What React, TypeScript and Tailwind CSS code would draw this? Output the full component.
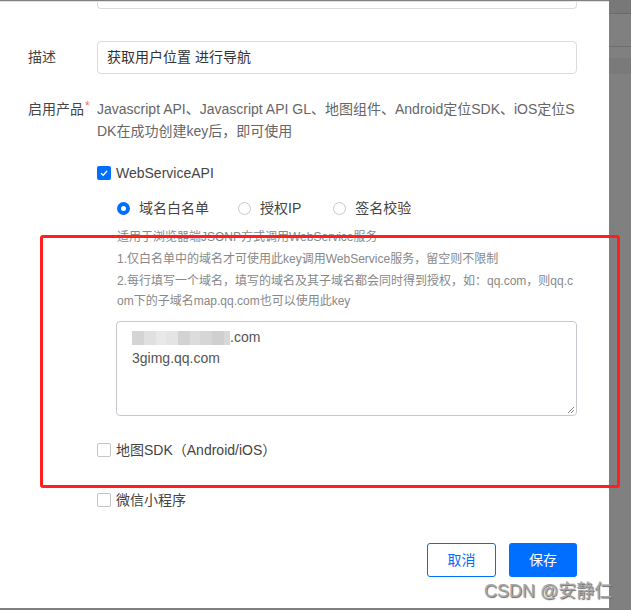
import React from 'react';

const font = { fontFamily: '"Liberation Sans", "Noto Sans CJK SC", sans-serif' };

function Checkbox({ checked, label }: { checked?: boolean; label: string }) {
    return (
        <div className="flex items-center h-5 gap-[5px]">
            {checked ? (
                <span className="w-[14px] h-[14px] rounded-[2px] bg-[#006eff] flex items-center justify-center">
                    <svg width="10" height="10" viewBox="0 0 10 10">
                        <path d="M2 5.2 L4.2 7.3 L8 3" fill="none" stroke="#fff" strokeWidth="1.4" />
                    </svg>
                </span>
            ) : (
                <span className="w-[14px] h-[14px] rounded-[2px] border border-[#c4c4c4] bg-white" />
            )}
            <span className="text-[14px] text-[#444]">{label}</span>
        </div>
    );
}

function Radio({ checked, label }: { checked?: boolean; label: string }) {
    return (
        <div className="flex items-center gap-[9px]">
            {checked ? (
                <span className="w-[13px] h-[13px] rounded-full border-[4px] border-[#006eff] bg-white" />
            ) : (
                <span className="w-[13px] h-[13px] rounded-full border border-[#c8c8c8] bg-white" />
            )}
            <span className="text-[14px] text-[#444]">{label}</span>
        </div>
    );
}

export default function App() {
    return (
        <div className="relative w-[631px] h-[610px] overflow-hidden bg-[#7f7f7f]" style={font}>
            <div className="flex">
                {/* 弹窗主体 */}
                <div className="w-[609px] h-[607px] bg-white border-t border-[#e2e2e2] mt-[1px]">
                    <div className="ml-[97px] w-[480px] h-[7px] border border-t-0 border-[#dcdcdc] rounded-b-[4px]" />

                    <div className="flex items-center mt-[32px]">
                        <div className="w-[97px] pl-[28px] text-[14px] text-[#444]">描述</div>
                        <div className="w-[480px] h-[33px] border border-[#dcdcdc] rounded-[4px] flex items-center px-[9px] text-[14px] text-[#333]">
                            获取用户位置 进行导航
                        </div>
                    </div>

                    <div className="flex mt-[24px]">
                        <div className="w-[97px] pl-[28px] text-[14px] text-[#444] leading-[22px] shrink-0">
                            启用产品<span className="text-[#f56c6c] text-[12px] align-top relative -top-[3px] ml-[1px]">*</span>
                        </div>
                        <div className="text-[14px] text-[#666] leading-[22px] whitespace-nowrap">
                            <div>Javascript API、Javascript API GL、地图组件、Android定位SDK、iOS定位S</div>
                            <div>DK在成功创建key后，即可使用</div>
                        </div>
                    </div>

                    <div className="ml-[97px] mt-[21px]">
                        <Checkbox checked label="WebServiceAPI" />

                        <div className="ml-[20px] mt-[15px] flex items-center h-5">
                            <Radio checked label="域名白名单" />
                            <div className="ml-[29px]">
                                <Radio label="授权IP" />
                            </div>
                            <div className="ml-[32px]">
                                <Radio label="签名校验" />
                            </div>
                        </div>

                        <div className="ml-[20px] mt-[9px] text-[12px] text-[#888] leading-[20px] whitespace-nowrap">
                            <div>适用于浏览器端JSONP方式调用WebService服务</div>
                            <div className="mt-[2px]">1.仅白名单中的域名才可使用此key调用WebService服务，留空则不限制</div>
                            <div className="mt-[2px]">2.每行填写一个域名，填写的域名及其子域名都会同时得到授权，如：qq.com，则qq.c</div>
                            <div>om下的子域名map.qq.com也可以使用此key</div>
                        </div>

                        <div className="relative ml-[19px] mt-[10px] w-[461px] h-[95px] border border-[#c6c9cf] rounded-[4px] pt-[5px] pl-[15px] text-[14px] text-[#555] leading-[21px]">
                            <div className="flex items-center">
                                <div className="flex h-[14px] blur-[0.6px]">
                                    <span className="w-[12px] bg-[#d4d4d4]" />
                                    <span className="w-[12px] bg-[#e0e0e0]" />
                                    <span className="w-[10px] bg-[#e8e8e8]" />
                                    <span className="w-[12px] bg-[#e4e4e4]" />
                                    <span className="w-[12px] bg-[#d2d2d2]" />
                                    <span className="w-[10px] bg-[#dcdcdc]" />
                                    <span className="w-[12px] bg-[#d6d6d6]" />
                                    <span className="w-[12px] bg-[#cfcfcf]" />
                                    <span className="w-[6px] bg-[#d8d8d8]" />
                                </div>
                                <span>.com</span>
                            </div>
                            <div>3gimg.qq.com</div>
                            <svg className="absolute right-[1px] bottom-[1px]" width="9" height="9" viewBox="0 0 9 9">
                                <path d="M8 2 L2 8 M8 5 L5 8" stroke="#888" strokeWidth="1" />
                            </svg>
                        </div>

                        <div className="mt-[24px]">
                            <Checkbox label="地图SDK（Android/iOS）" />
                        </div>
                        <div className="mt-[30px]">
                            <Checkbox label="微信小程序" />
                        </div>

                        <div className="mt-[33px] w-[480px] flex justify-end gap-[13px]">
                            <button className="w-[69px] h-[34px] rounded-[3px] border border-[#006eff] text-[#006eff] text-[14px] bg-white">
                                取消
                            </button>
                            <button className="w-[68px] h-[34px] rounded-[3px] bg-[#006eff] text-white text-[14px]">
                                保存
                            </button>
                        </div>
                    </div>
                </div>

                {/* 右侧遮罩 */}
                <div className="flex-1 flex flex-col">
                    <div className="h-[13px] bg-[#787878]" />
                    <div className="h-px bg-[#6c6c6c]" />
                    <div className="h-[32px] bg-[#808080]" />
                    <div className="h-px bg-[#6e6e6e]" />
                    <div className="h-[11px] bg-[#808080]" />
                    <div className="h-[16px] bg-[#7a7a7a]" />
                    <div className="flex-1 bg-[#808080]" />
                </div>
            </div>

            {/* 标注框 */}
            <div className="absolute left-[40px] top-[235px] w-[580px] h-[253px] border-[3px] border-[#ff1f1f] rounded-[3px]" />

            {/* 水印 */}
            <div className="absolute left-[484px] top-[578px] text-[18px] text-[#a6a6a6] [text-shadow:1px_1px_1px_#666] whitespace-nowrap">
                CSDN @安静仁
            </div>
        </div>
    );
}
